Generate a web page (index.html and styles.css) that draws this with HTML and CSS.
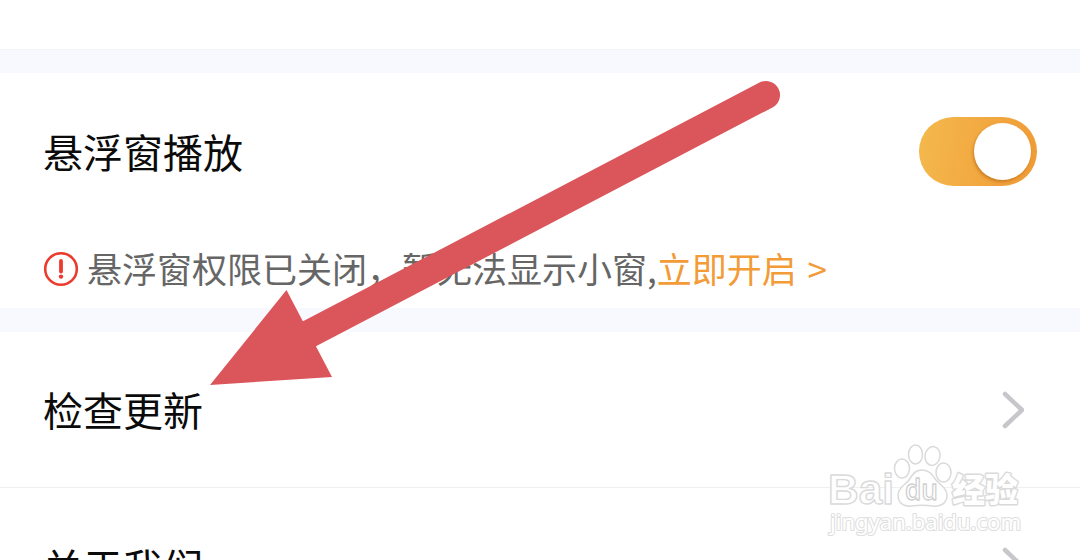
FILE: index.html
```
<!DOCTYPE html>
<html lang="zh-CN">
<head>
  <meta charset="UTF-8" />
  <meta name="viewport" content="width=device-width, initial-scale=1" />
  <title>设置</title>
  <link rel="stylesheet" href="styles.css">
</head>
<body>
  <main class="settings">
    <section class="group group-top"></section>
    <section class="group">
      <div class="row row-switch">
        <span class="label">悬浮窗播放</span>
        <button class="switch" role="switch" aria-checked="true" aria-label="悬浮窗播放"><span class="knob"></span></button>
      </div>
      <div class="hint">
        <svg class="warn" width="36" height="36" viewBox="0 0 36 36">
          <circle cx="18" cy="18" r="15.8" fill="none" stroke="#ec3a2e" stroke-width="2.6" />
          <path d="M18 10v10.5" stroke="#ec3a2e" stroke-width="3.8" stroke-linecap="round" />
          <circle cx="18" cy="25.6" r="2.2" fill="#ec3a2e" />
        </svg>
        <span class="hint-text">悬浮窗权限已关闭，暂无法显示小窗,<a class="open-link">立即开启 <span class="more">&gt;</span></a></span>
      </div>
    </section>
    <section class="group">
      <div class="row">
        <span class="label">检查更新</span>
        <svg class="chevron" width="24" height="40" viewBox="0 0 24 40"><path d="M5 4l17 16L5 36" /></svg>
      </div>
      <div class="row row-last">
        <span class="label">关于我们</span>
        <svg class="chevron" width="24" height="40" viewBox="0 0 24 40"><path d="M5 4l17 16L5 36" /></svg>
      </div>
    </section>
  </main>

  <svg class="overlay" width="1080" height="560" viewBox="0 0 1080 560">
    <!-- watermark -->
    <g class="watermark">
      <text class="wm-latin" x="828" y="503.5" font-size="42" textLength="66" lengthAdjust="spacingAndGlyphs">Bai</text>
      <ellipse cx="902" cy="468.5" rx="7.5" ry="9.5" />
      <ellipse cx="915.5" cy="454.5" rx="7" ry="9.5" />
      <ellipse cx="932.5" cy="456" rx="7.5" ry="9.5" transform="rotate(10 932.5 456)" />
      <ellipse cx="943.5" cy="472.5" rx="7.5" ry="9.5" />
      <path d="M922 470c-7 0-10 5-13 10-4 5-11 8-11 15 0 8 6 12 13 11 8-1 14-1 22 0 8 1 14-3 14-11 0-7-7-10-11-15-4-6-7-10-14-10z" />
      <text class="wm-du" x="905" y="500" font-size="28" textLength="33" lengthAdjust="spacingAndGlyphs">du</text>
      <text class="wm-cjk" x="952" y="501.5" font-size="33">经验</text>
      <text class="wm-url" x="830" y="530" font-size="22" textLength="191" lengthAdjust="spacingAndGlyphs">jingyan.baidu.com</text>
    </g>
    <!-- pointer arrow -->
    <path d="M309 334L766 95" stroke="#db565b" stroke-width="28" stroke-linecap="round" />
    <path d="M210 385L286.5 290L332 377z" fill="#db565b" />
  </svg>
</body>
</html>
```

FILE: styles.css
```
* {
  box-sizing: border-box;
}
html {
  height: 560px;
  overflow: hidden;
}
body {
  margin: 0;
  height: 560px;
  overflow: hidden;
  position: relative;
  background: #f8f9fe;
  color: #0b0b0b;
  font-family: "Noto Sans CJK SC", sans-serif;
}
.settings {
  height: 560px;
  overflow: hidden;
  display: flex;
  flex-direction: column;
  gap: 24px;
}
.group {
  background: #fff;
  flex-shrink: 0;
}
.group-top {
  height: 49px;
  box-shadow: 0 1px 0 #f3f4f6;
}
.row {
  height: 156px;
  padding: 0 56px 0 43px;
  display: flex;
  align-items: center;
  justify-content: space-between;
  border-bottom: 1px solid #f0f0f1;
}
.row-switch {
  padding-right: 43px;
  border-bottom: none;
}
.row-last {
  border-bottom: none;
}
.label {
  font-size: 40px;
  line-height: 60px;
  margin-top: -1px;
}
.switch {
  width: 118px;
  height: 69px;
  padding: 0 6px;
  display: flex;
  align-items: center;
  justify-content: flex-end;
  border: none;
  border-radius: 35px;
  background: linear-gradient(100deg, #f4b94d, #f09a35);
}
.knob {
  width: 57px;
  height: 57px;
  border-radius: 50%;
  background: #fff;
  box-shadow: -1px 2px 3px rgba(170, 90, 10, 0.5);
}
.hint {
  height: 79px;
  padding: 0 0 0 43px;
  display: flex;
  align-items: flex-start;
  gap: 8px;
}
.warn {
  margin-top: 22px;
}
.hint-text {
  font-size: 35px;
  line-height: 52px;
  margin-top: 13px;
  color: #666;
  white-space: nowrap;
}
.open-link {
  color: #f29b37;
}
.more {
  margin-left: 3px;
}
.chevron path {
  fill: none;
  stroke: #c7c7cb;
  stroke-width: 4.5;
  stroke-linecap: round;
  stroke-linejoin: round;
}
.overlay {
  position: absolute;
  left: 0;
  top: 0;
}
.watermark {
  fill: #fff;
  stroke: #dadada;
  stroke-width: 1.5;
  stroke-linejoin: round;
}
.watermark text {
  paint-order: stroke;
  stroke-width: 2.8;
}
.watermark .wm-latin {
  font-family: "Liberation Sans", sans-serif;
  font-weight: bold;
  paint-order: normal;
  stroke-width: 1.4;
}
.watermark .wm-du {
  font-family: "Open Sans", sans-serif;
  font-weight: 600;
  paint-order: normal;
  stroke: #cfcfcf;
  stroke-width: 1.3;
}
.wm-cjk {
  font-family: "Noto Sans CJK SC", sans-serif;
  font-weight: 900;
}
.watermark .wm-url {
  font-family: "Noto Sans", sans-serif;
  stroke: #e0e0e0;
  stroke-width: 2.2;
}
```
